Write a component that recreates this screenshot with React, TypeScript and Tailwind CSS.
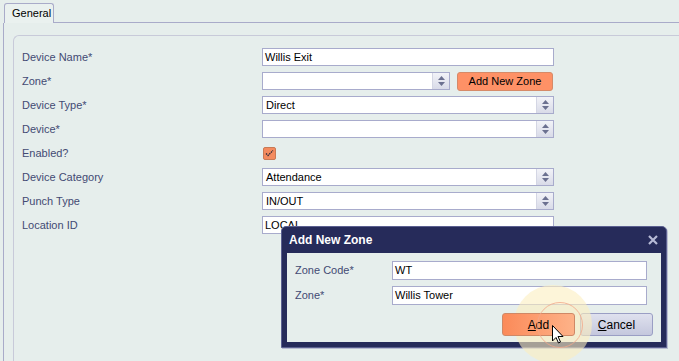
import React from 'react';

const font = { fontFamily: '"Liberation Sans", Arial, sans-serif' };

function Spin() {
  return (
    <div className="flex h-full w-[17px] flex-col items-center justify-center gap-[2px] border-l border-[#d4d6e4] bg-gradient-to-b from-[#f2f3f8] to-[#d9dbe8]">
      <svg width="7" height="4" viewBox="0 0 7 4"><path d="M3.5 0L7 4H0z" fill="#6b7090" /></svg>
      <svg width="7" height="4" viewBox="0 0 7 4"><path d="M0 0h7L3.5 4z" fill="#6b7090" /></svg>
    </div>
  );
}

function TextBox({ value, className = '' }: { value?: string; className?: string }) {
  return (
    <div className={`flex h-[18px] items-center border border-[#a8abcc] bg-white pl-[2px] text-[11px] text-black ${className}`}>
      {value}
    </div>
  );
}

function Combo({ value, className = '' }: { value?: string; className?: string }) {
  return (
    <div className={`flex h-[18px] items-center border border-[#a8abcc] bg-white text-[11px] text-black ${className}`}>
      <span className="flex-1 pl-[3px]">{value}</span>
      <Spin />
    </div>
  );
}

function Row({ label, children }: { label: string; children: React.ReactNode }) {
  return (
    <div className="flex h-[18px] items-center">
      <div className="w-[248px] pl-[8px] text-[11px] text-[#434a73]">{label}</div>
      <div className="flex w-[292px] items-center">{children}</div>
    </div>
  );
}

export default function App() {
  return (
    <div className="relative h-[361px] w-[679px] overflow-hidden bg-[#e6eeec]" style={font}>
      {/* Tab strip */}
      <div className="flex h-[23px] items-end pl-[4px]">
        <div className="flex h-[20px] w-[50px] items-center rounded-t-[3px] border border-b-0 border-[#a9abc9] bg-[#eaf1ef] pl-[7px] text-[11px] text-black">
          General
        </div>
        <div className="h-px flex-1 bg-[#a9abc9]" />
      </div>

      {/* Tab page */}
      <div className="ml-[3px] h-[338px] border-l border-[#a9abc9] pl-[9px] pt-[12px]">
        <div className="h-[400px] rounded-tl-[6px] border-l border-t border-[#c8cad9] pt-[12px]">
          <div className="flex flex-col gap-[6px]">
            <Row label="Device Name*">
              <TextBox value="Willis Exit" className="w-[292px]" />
            </Row>
            <Row label="Zone*">
              <Combo className="w-[188px]" />
              <div className="ml-[7px] flex h-[19px] w-[96px] items-center justify-center rounded-[3px] border border-[#d68a68] bg-[#fe9166] text-[11px] text-black">
                Add New Zone
              </div>
            </Row>
            <Row label="Device Type*">
              <Combo value="Direct" className="w-[292px]" />
            </Row>
            <Row label="Device*">
              <Combo className="w-[292px]" />
            </Row>
            <Row label="Enabled?">
              <div className="ml-px flex h-[13px] w-[13px] items-center justify-center rounded-[2px] border border-[#c97a55] bg-[#f48b5f]">
                <svg width="9" height="8" viewBox="0 0 9 8">
                  <path d="M1 4.5L3 6.5L8 1.5" stroke="#2b2b3a" strokeWidth="1.3" fill="none" strokeDasharray="1.5 0.8" />
                </svg>
              </div>
            </Row>
            <Row label="Device Category">
              <Combo value="Attendance" className="w-[292px]" />
            </Row>
            <Row label="Punch Type">
              <Combo value="IN/OUT" className="w-[292px]" />
            </Row>
            <Row label="Location ID">
              <TextBox value="LOCAL" className="w-[292px]" />
            </Row>
          </div>
        </div>
      </div>

      {/* Add New Zone dialog */}
      <div className="absolute left-[281px] top-[226px] flex h-[122px] w-[386px] flex-col rounded-t-[5px] border border-[#5b6090] bg-[#262b5a] px-[5px] pb-[5px] shadow-[1px_1px_0_#b9bdd0]">
        <div className="flex h-[26px] items-center justify-between pl-[2px] pr-[3px]">
          <span className="text-[12px] font-bold text-white">Add New Zone</span>
          <svg width="10" height="10" viewBox="0 0 10 10">
            <path d="M1 1L9 9M9 1L1 9" stroke="#b7bbd6" strokeWidth="2.2" />
          </svg>
        </div>
        <div className="relative flex-1 bg-[#e6eeec] px-[8px] pt-[8px]">
          <div className="flex flex-col gap-[6px]">
            <div className="flex h-[19px] items-center">
              <span className="w-[97px] text-[11px] text-[#434a73]">Zone Code*</span>
              <TextBox value="WT" className="h-[19px] w-[255px]" />
            </div>
            <div className="flex h-[19px] items-center">
              <span className="w-[97px] text-[11px] text-[#434a73]">Zone*</span>
              <TextBox value="Willis Tower" className="h-[19px] w-[255px]" />
            </div>
          </div>
          <div className="mt-[8px] flex justify-end gap-[5px]">
            <div className="relative flex h-[23px] w-[73px] items-center justify-center">
              <div className="absolute left-[12px] top-[-28px] h-[78px] w-[78px] rounded-full bg-[#fbeec0]/60" />
              <div className="relative flex h-[23px] w-[73px] items-center justify-center rounded-[3px] border border-[#cf8866] bg-gradient-to-r from-[#fb8a59] to-[#fdb288] text-[12px] text-black">
                <span><span className="underline">A</span>dd</span>
                <div className="absolute left-[34px] top-[-12px] h-[46px] w-[46px] rounded-full border border-[#f2a78a]/80" />
              </div>
            </div>
            <div className="flex h-[23px] w-[73px] items-center justify-center rounded-[3px] border border-[#9a9ec4] bg-gradient-to-b from-[#dfe1ee] to-[#c4c7dd] text-[12px] text-black">
              <span><span className="underline">C</span>ancel</span>
            </div>
          </div>
        </div>
      </div>

      {/* Mouse cursor */}
      <svg className="absolute left-[552px] top-[325px]" width="12" height="19" viewBox="0 0 12 19">
        <path d="M0.5 0.5V16L4 12.5L6.5 18L8.5 17L6 11.5H11Z" fill="white" stroke="black" strokeWidth="1" />
      </svg>
    </div>
  );
}
